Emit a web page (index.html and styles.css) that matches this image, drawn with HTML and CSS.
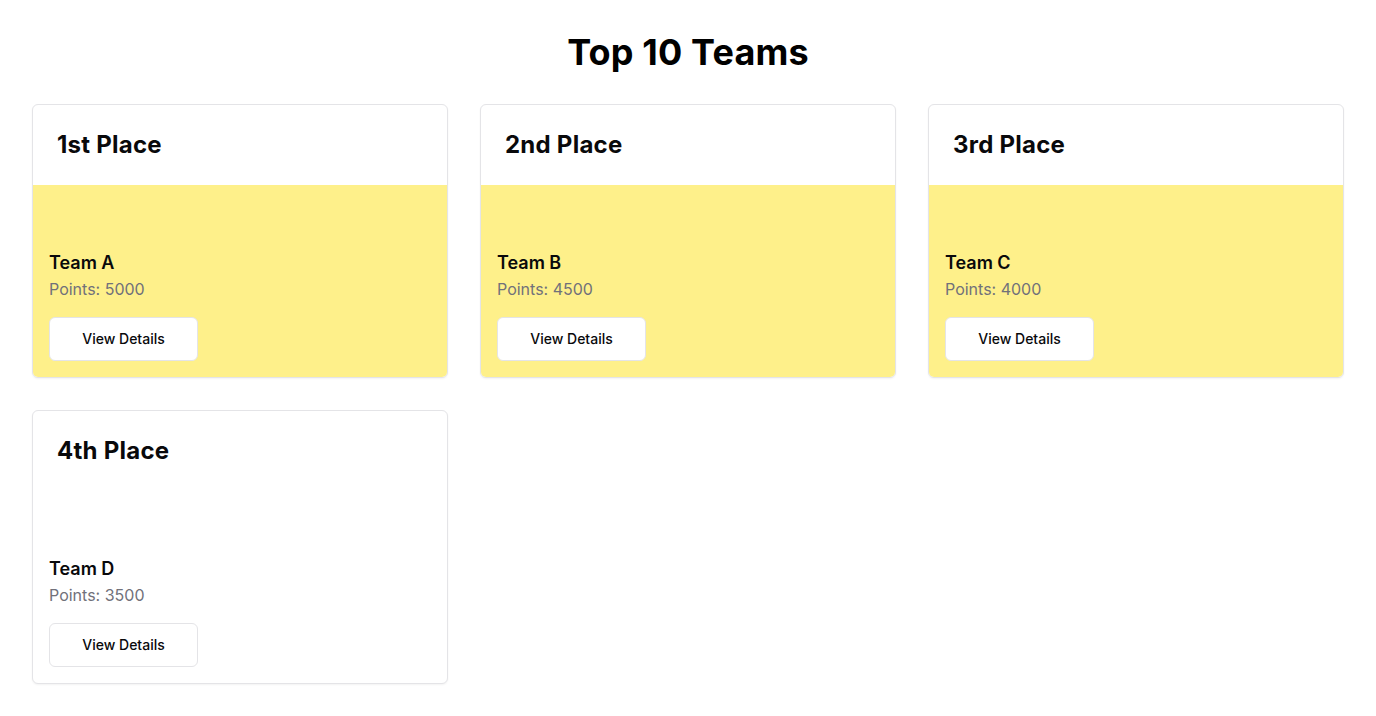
FILE: index.html
```html
<!DOCTYPE html>
<html lang="en">
<head>
<meta charset="utf-8">
<title>Top 10 Teams</title>
<link rel="stylesheet" href="styles.css">
</head>
<body>
<main class="page">
  <h1 class="title">Top 10 Teams</h1>
  <div class="grid">
    <div class="card">
      <div class="card-header"><h2 class="card-title">1st Place</h2></div>
      <div class="card-content highlight">
        <div class="spacer"></div>
        <h3 class="team">Team A</h3>
        <p class="points">Points: 5000</p>
        <button class="btn">View Details</button>
      </div>
    </div>
    <div class="card">
      <div class="card-header"><h2 class="card-title">2nd Place</h2></div>
      <div class="card-content highlight">
        <div class="spacer"></div>
        <h3 class="team">Team B</h3>
        <p class="points">Points: 4500</p>
        <button class="btn">View Details</button>
      </div>
    </div>
    <div class="card">
      <div class="card-header"><h2 class="card-title">3rd Place</h2></div>
      <div class="card-content highlight">
        <div class="spacer"></div>
        <h3 class="team">Team C</h3>
        <p class="points">Points: 4000</p>
        <button class="btn">View Details</button>
      </div>
    </div>
    <div class="card">
      <div class="card-header"><h2 class="card-title">4th Place</h2></div>
      <div class="card-content">
        <div class="spacer"></div>
        <h3 class="team">Team D</h3>
        <p class="points">Points: 3500</p>
        <button class="btn">View Details</button>
      </div>
    </div>
  </div>
</main>
</body>
</html>
```
FILE: styles.css
```css
* { box-sizing: border-box; }
html, body { margin: 0; padding: 0; background: #ffffff; }
body {
  font-family: Inter, "Noto Sans", sans-serif;
  color: #09090b;
}
.page { padding: 32px; }
.title {
  margin: 0 0 32px;
  text-align: center;
  font-size: 36px;
  line-height: 40px;
  font-weight: 700;
  letter-spacing: 0.15px;
  color: #000;
}
.grid {
  display: grid;
  grid-template-columns: repeat(3, 1fr);
  gap: 32px;
}
.card {
  border: 1px solid #e4e4e7;
  border-radius: 6px;
  background: #fff;
  overflow: hidden;
  box-shadow: 0 1px 2px rgba(0,0,0,0.05);
  display: flex;
  flex-direction: column;
}
.card-header { padding: 24px; }
.card-title {
  margin: 0;
  font-size: 24px;
  line-height: 32px;
  font-weight: 700;
  letter-spacing: 0.25px;
}
.card-content {
  padding: 16px;
  display: flex;
  flex-direction: column;
  align-items: flex-start;
}
.card-content.highlight { background: #fef08a; }
.spacer { height: 48px; }
.team {
  margin: 0;
  font-size: 18px;
  line-height: 28px;
  font-weight: 600;
}
.points {
  margin: 0;
  font-size: 16px;
  line-height: 24px;
  color: #71717a;
}
.btn {
  margin-top: 16px;
  height: 44px;
  width: 149px;
  padding: 0 32px 1px;
  border: 1px solid #e4e4e7;
  border-radius: 6px;
  background: #fff;
  font-family: inherit;
  font-size: 14px;
  font-weight: 500;
  color: #09090b;
}
```
